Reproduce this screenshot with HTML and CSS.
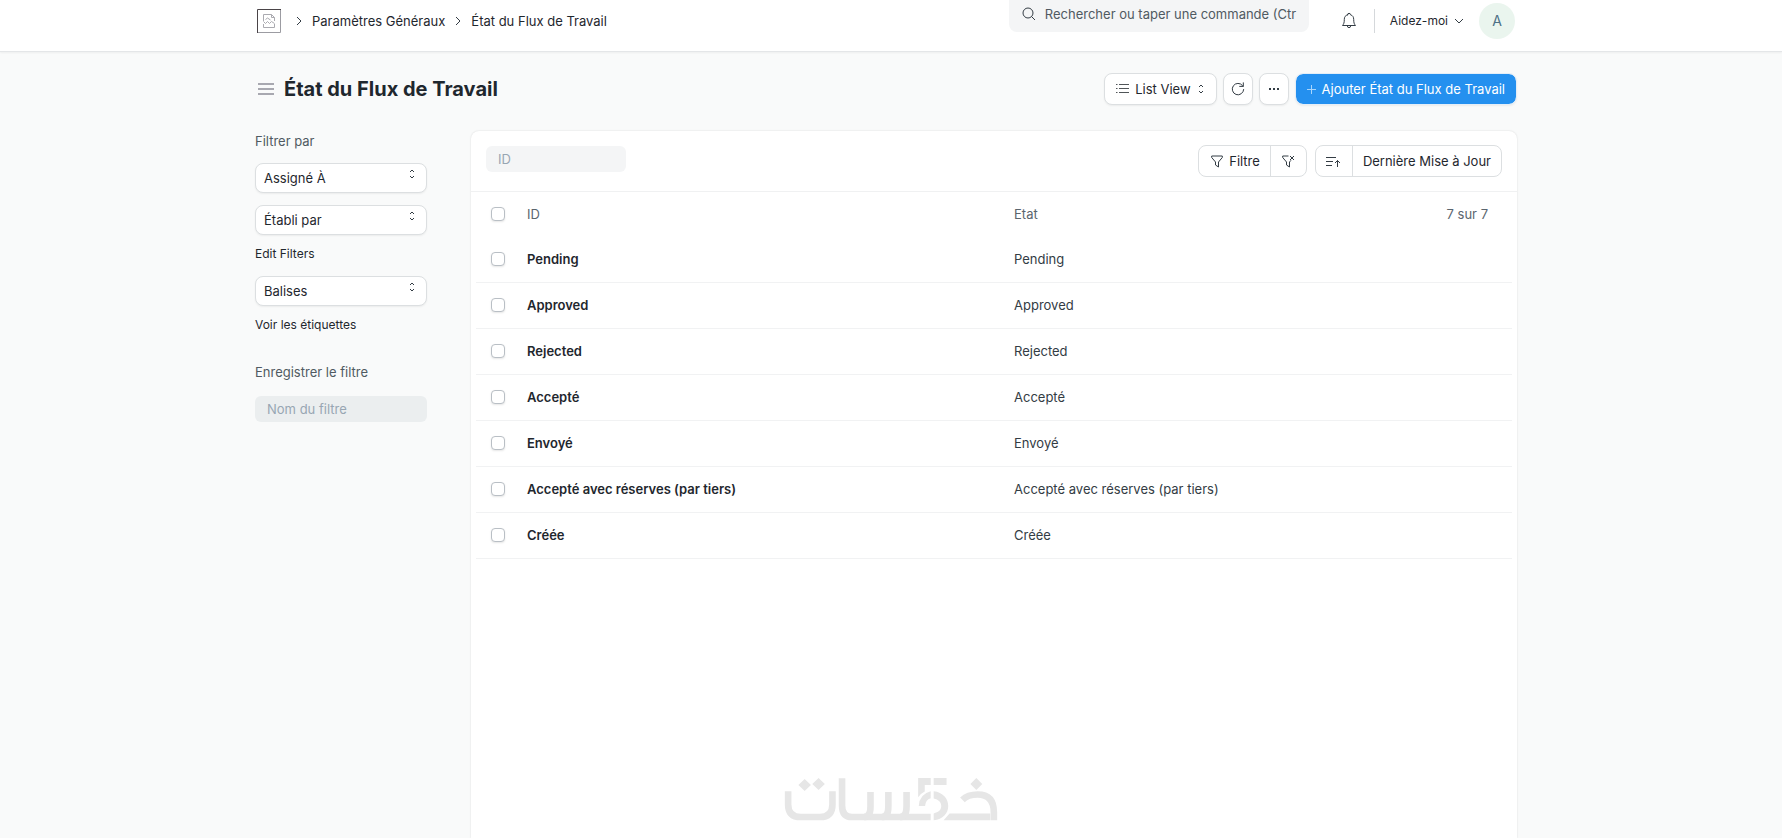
FILE: index.html
```html
<!DOCTYPE html>
<html lang="fr">
<head>
<meta charset="utf-8">
<meta name="viewport" content="width=device-width, initial-scale=1">
<title>État du Flux de Travail</title>
<link rel="stylesheet" href="styles.css">
</head>
<body>
<header class="navbar">
  <div class="container navbar-inner">
    <nav class="breadcrumbs" aria-label="Fil d'Ariane">
      <a class="home" href="#" aria-label="Accueil">
        <svg width="24" height="24" viewBox="0 0 24 24" fill="none">
          <path d="M23.5 0v23.5H0" stroke="#9c9ca2"/>
          <path d="M.5 24V.5H24" stroke="#4a4448"/>
          <path d="M6.500 12V5.500h8l3 3V12M14.500 5.500v3h3M6.500 15v3.500h11V15M6.500 12.500l2 2 2-2 2 2 2-2 3 2M8.500 10.500l2-1.500 3 2" stroke="#aaaab0"/>
        </svg>
      </a>
      <svg class="sep" width="6" height="10" viewBox="0 0 6 10"><path d="M1 1l4 4-4 4" stroke="#333c44" fill="none"/></svg>
      <a href="#">Paramètres Généraux</a>
      <svg class="sep" width="6" height="10" viewBox="0 0 6 10"><path d="M1 1l4 4-4 4" stroke="#333c44" fill="none"/></svg>
      <a href="#">État du Flux de Travail</a>
    </nav>
    <div class="navbar-tools">
      <div class="search">
        <svg width="14" height="14" viewBox="0 0 14 14" fill="none" stroke="#333c44"><circle cx="6" cy="6" r="5"/><path d="M9.700 9.700l3 3" stroke-linecap="round"/></svg>
        <input type="text" aria-label="Rechercher" placeholder="Rechercher ou taper une commande (Ctr">
      </div>
      <button class="icon-button bell" aria-label="Notifications">
        <svg width="16" height="18" viewBox="0 0 16 18" fill="none" stroke="#333c44" stroke-linejoin="round" stroke-linecap="round"><path d="M6.500 2.800a1.500 1.500 0 0 1 3 0C11.700 3.400 12.700 5 12.700 7.500c0 3.500.6 4.500 1.800 6h-13c1.200-1.500 1.800-2.500 1.800-6 0-2.500 1-4.100 3.200-4.700z"/><path d="M6.300 13.800a1.700 1.900 0 0 0 3.400 0"/></svg>
      </button>
      <button class="help">Aidez-moi
        <svg width="10" height="6" viewBox="0 0 10 6"><path d="M1 1l4 4 4-4" stroke="#333c44" fill="none"/></svg>
      </button>
      <button class="avatar" aria-label="Compte">A</button>
    </div>
  </div>
</header>

<main class="container page">
  <div class="page-head">
    <div class="page-title">
      <button class="icon-button" aria-label="Menu latéral">
        <svg width="16" height="12" viewBox="0 0 16 12" stroke="#a8a8b0" stroke-width="2"><path d="M0 1h16M0 6h16M0 11h16"/></svg>
      </button>
      <h1>État du Flux de Travail</h1>
    </div>
    <div class="page-actions">
      <button class="btn btn-view">
        <svg width="13" height="12" viewBox="0 0 13 12" stroke="#505558"><path d="M3 1.500h10M3 5.500h10M3 9.500h10M0 1.500h1.500M0 5.500h1.500M0 9.500h1.500"/></svg>
        List View
        <svg width="8" height="10" viewBox="0 0 8 10"><path d="M2 3l2-2 2 2M2 7l2 2 2-2" stroke="#333c44" fill="none"/></svg>
      </button>
      <button class="btn btn-square" aria-label="Actualiser">
        <svg width="14" height="14" viewBox="0 0 14 14" fill="none" stroke="#333c44"><path d="M12.700 7.500A5.700 5.700 0 1 1 11.500 3.600L12 4.200M12.300 .8v3.600H8.700" stroke-linecap="round" stroke-linejoin="round"/></svg>
      </button>
      <button class="btn btn-square" aria-label="Plus d'actions">
        <svg width="10" height="2" viewBox="0 0 10 2" fill="#333c44"><path d="M0 0h2v2H0zM4 0h2v2H4zM8 0h2v2H8z"/></svg>
      </button>
      <button class="btn btn-primary">
        <svg width="9" height="9" viewBox="0 0 9 9" stroke="#a9d5fb"><path d="M4.500 0v9M0 4.500h9"/></svg>
        Ajouter État du Flux de Travail
      </button>
    </div>
  </div>

  <div class="layout">
    <aside class="sidebar">
      <h2>Filtrer par</h2>
      <div class="picker">
        <select aria-label="Assigné À"><option>Assigné À</option></select>
        <svg width="8" height="10" viewBox="0 0 8 10"><path d="M2 3l2-2 2 2M2 7l2 2 2-2" stroke="#333c44" fill="none"/></svg>
      </div>
      <div class="picker">
        <select aria-label="Établi par"><option>Établi par</option></select>
        <svg width="8" height="10" viewBox="0 0 8 10"><path d="M2 3l2-2 2 2M2 7l2 2 2-2" stroke="#333c44" fill="none"/></svg>
      </div>
      <a href="#">Edit Filters</a>
      <div class="picker">
        <select aria-label="Balises"><option>Balises</option></select>
        <svg width="8" height="10" viewBox="0 0 8 10"><path d="M2 3l2-2 2 2M2 7l2 2 2-2" stroke="#333c44" fill="none"/></svg>
      </div>
      <a href="#">Voir les étiquettes</a>
      <h2 class="save-label"><label for="filter-name">Enregistrer le filtre</label></h2>
      <input id="filter-name" class="field" type="text" placeholder="Nom du filtre">
    </aside>

    <section class="card">
      <div class="toolbar">
        <input class="field id-field" type="text" aria-label="ID" placeholder="ID">
        <div class="toolbar-actions">
          <div class="group">
            <button class="filter"><svg width="12" height="13" viewBox="0 0 12 13" fill="none" stroke="#333c44" stroke-linejoin="round"><path d="M.7 1h10.600v1.500L7.500 7v5l-3-2V7L.7 2.500z"/></svg>Filtre</button>
            <button class="clear" aria-label="Effacer les filtres"><svg width="13" height="13" viewBox="0 0 13 13" fill="none" stroke="#333c44" stroke-linejoin="round"><path d="M6.500 1H.7v1.500L4.500 7v3l3 2V7l1.500-1.700M8 1l4 4M12 1L8 5"/></svg></button>
          </div>
          <div class="group">
            <button class="order" aria-label="Ordre de tri"><svg width="15" height="11" viewBox="0 0 15 11" fill="none" stroke="#333c44"><path d="M0 1.500h10M0 5.500h7M0 9.500h6M11.500 11V4.500M9 7l2.500-2.500L14 7"/></svg></button>
            <button class="sort">Dernière Mise à Jour</button>
          </div>
        </div>
      </div>
      <div class="list">
        <table>
          <thead>
            <tr><th class="check"><input type="checkbox" aria-label="Tout sélectionner"></th><th class="name">ID</th><th>Etat</th><th class="count">7 sur 7</th></tr>
          </thead>
          <tbody>
            <tr><td><input type="checkbox" aria-label="Pending"></td><td><a href="#">Pending</a></td><td>Pending</td><td></td></tr>
            <tr><td><input type="checkbox" aria-label="Approved"></td><td><a href="#">Approved</a></td><td>Approved</td><td></td></tr>
            <tr><td><input type="checkbox" aria-label="Rejected"></td><td><a href="#">Rejected</a></td><td>Rejected</td><td></td></tr>
            <tr><td><input type="checkbox" aria-label="Accepté"></td><td><a href="#">Accepté</a></td><td>Accepté</td><td></td></tr>
            <tr><td><input type="checkbox" aria-label="Envoyé"></td><td><a href="#">Envoyé</a></td><td>Envoyé</td><td></td></tr>
            <tr><td><input type="checkbox" aria-label="Accepté avec réserves (par tiers)"></td><td><a href="#">Accepté avec réserves (par tiers)</a></td><td>Accepté avec réserves (par tiers)</td><td></td></tr>
            <tr><td><input type="checkbox" aria-label="Créée"></td><td><a href="#">Créée</a></td><td>Créée</td><td></td></tr>
          </tbody>
        </table>
      </div>
    </section>
  </div>
</main>

<svg class="watermark" width="214" height="43" viewBox="42 52 642 130" fill="none" stroke="#e6e6e6" stroke-width="20">
  <path d="M52 92v40q0 38 38 38h58q38 0 38-38V92"/>
  <path d="M215 53v82q0 35 30 35h238"/>
  <path d="M301 94v44q0 32-20 32M355 94v44q0 32-20 32M410 94v44q0 32-20 32"/>
  <path d="M102 55l19 18-19 18-19-18zM144 52l19 18-19 18-19-18zM621 52l18 18-18 18-18-18z" fill="#e6e6e6" stroke="none"/>
  <path d="M445 52h38v21h-18v20q-12 6-20 17zM492 52h39v21h-39zM447 137q1-36 36-45v21q-16 5-17 24zM492 92c28 3 44 22 44 45s-16 40-44 43v-21c15-3 23-11 23-22s-8-20-23-23z" fill="#e6e6e6" stroke="none"/>
  <path d="M522 180l18-21h123v21z" fill="#e6e6e6" stroke="none"/>
  <path d="M579 118q16-16 46-16 49 0 49 54v24"/>
</svg>
</body>
</html>
```
FILE: styles.css
```css
* {
  box-sizing: border-box;
}

body {
  margin: 0;
  min-height: 100vh;
  display: flex;
  flex-direction: column;
  background: #f9fafa;
  color: #1f272e;
  font: 13px/20px Inter, "Liberation Sans", sans-serif;
}

button,
input,
select {
  font: inherit;
  color: inherit;
  margin: 0;
}

button {
  display: flex;
  align-items: center;
  justify-content: center;
  padding: 0;
  border: 0;
  background: none;
}

a {
  color: inherit;
  text-decoration: none;
}

svg {
  display: block;
  flex: none;
}

h1,
h2 {
  margin: 0;
}

::placeholder {
  color: #98a6b3;
  opacity: 1;
}

.container {
  width: 100%;
  max-width: 1292px;
  margin: 0 auto;
  padding: 0 20px 0 10px;
}

.navbar {
  height: 52px;
  background: #fff;
  border-bottom: 1px solid #e4e6e8;
  box-shadow: 0 1px 2px rgba(0, 0, 0, 0.05);
}

.navbar-inner,
.breadcrumbs,
.navbar-tools,
.page-head,
.page-title,
.page-actions,
.toolbar,
.toolbar-actions {
  display: flex;
  align-items: center;
}

.navbar-inner {
  height: 42px;
  justify-content: space-between;
}

.navbar-tools {
  height: 100%;
}

.home {
  margin: 0 15px 0 2px;
}

.sep {
  margin-right: 10px;
}

.breadcrumbs a + .sep:not(:nth-child(2)) {
  margin-left: 10px;
}

.search {
  align-self: flex-start;
  display: flex;
  align-items: center;
  gap: 9px;
  width: 300px;
  height: 32px;
  padding: 0 12px 4px 13px;
  background: #f4f5f6;
  border-radius: 0 0 8px 8px;
}

.search input {
  flex: 1;
  min-width: 0;
  padding: 0;
  border: 0;
  background: none;
}

.search ::placeholder {
  color: #505a62;
}

.bell {
  margin: 0 17px 0 32px;
}

.help {
  height: 24px;
  gap: 6px;
  padding-left: 15px;
  border-left: 1px solid #d5d8db;
  font-size: 12px;
}

.avatar {
  width: 36px;
  height: 36px;
  margin: 0 2px 0 15px;
  border-radius: 50%;
  background: #eaf5ee;
  color: #4d7186;
  font-size: 14px;
}

.page {
  flex: 1;
  display: flex;
  flex-direction: column;
}

.page-head {
  height: 74px;
  justify-content: space-between;
}

.page-title {
  gap: 10px;
  padding-left: 3px;
}

h1 {
  font-size: 20px;
  line-height: 28px;
  font-weight: 700;
}

.page-actions {
  gap: 6px;
}

.btn {
  height: 32px;
  border: 1px solid #dcdfe1;
  border-radius: 8px;
  background: #fff;
  box-shadow: 0 1px 2px rgba(0, 0, 0, 0.06);
}

.btn-view {
  gap: 6px;
  padding: 0 11px;
}

.btn-square {
  width: 30px;
}

.btn-primary {
  gap: 6px;
  padding: 0 11px;
  border-color: #e4eef8;
  background: #2490ef;
  background-clip: padding-box;
  color: #fff;
}

.layout {
  flex: 1;
  display: flex;
  gap: 44px;
  padding-top: 5px;
}

.sidebar {
  width: 172px;
  font-size: 12px;
}

.sidebar h2 {
  margin-bottom: 12px;
  color: #505a62;
  font-size: 13px;
  font-weight: 400;
}

.sidebar > a {
  display: block;
  margin-bottom: 12px;
}

.sidebar .save-label {
  margin: 27px 0 14px;
}

.picker {
  position: relative;
  height: 30px;
  margin-bottom: 12px;
}

.picker + a {
  margin-top: -3px;
}

.picker select {
  width: 100%;
  height: 100%;
  padding: 0 8px;
  border: 1px solid #dcdfe1;
  border-radius: 8px;
  background: #fff;
  box-shadow: 0 1px 2px rgba(0, 0, 0, 0.06);
  appearance: none;
  font-size: 13px;
}

.picker svg {
  position: absolute;
  top: 6px;
  right: 11px;
  pointer-events: none;
}

.field {
  width: 100%;
  height: 26px;
  padding: 0 12px;
  border: 0;
  border-radius: 6px;
  background: #ebeeef;
  font-size: 13px;
}

.card {
  flex: 1;
  min-width: 0;
  border-radius: 8px 8px 0 0;
  background: #fff;
  box-shadow: 0 0 2px rgba(0, 0, 0, 0.14);
}

.toolbar {
  height: 61px;
  padding: 0 15px;
  justify-content: space-between;
  border-bottom: 1px solid #f0f1f2;
}

.id-field {
  width: 140px;
  padding: 0 12px;
  margin-bottom: 4px;
  background: #f4f5f6;
}

.toolbar-actions {
  gap: 8px;
}

.group {
  display: flex;
  height: 32px;
  border: 1px solid #dcdfe1;
  border-radius: 8px;
}

.group button + button {
  border-left: 1px solid #dcdfe1;
}

.filter {
  gap: 6px;
  padding: 0 10px 0 12px;
}

.clear,
.order {
  width: 36px;
}

.sort {
  padding: 0 10px;
}

.list {
  padding: 0 5px;
}

table {
  width: 100%;
  table-layout: fixed;
  border-collapse: collapse;
}

th,
td {
  height: 46px;
  padding: 0;
  border-bottom: 1px solid #f1f2f3;
  text-align: left;
  font-weight: 400;
  color: #333c44;
}

th {
  height: 44px;
  border: 0;
  color: #5a656e;
}

td a {
  color: #1f272e;
  font-weight: 600;
}

.check {
  width: 51px;
}

.name {
  width: 487px;
}

.count {
  padding-right: 24px;
  text-align: right;
}

input[type="checkbox"] {
  display: block;
  width: 14px;
  height: 14px;
  margin-left: 15px;
  border: 1px solid #b9bfc5;
  border-radius: 4px;
  background: #fff;
  box-shadow: 0 1px 2px rgba(0, 0, 0, 0.1);
  appearance: none;
}

.watermark {
  position: fixed;
  left: 50%;
  bottom: 17px;
  transform: translateX(-50%);
}
```
